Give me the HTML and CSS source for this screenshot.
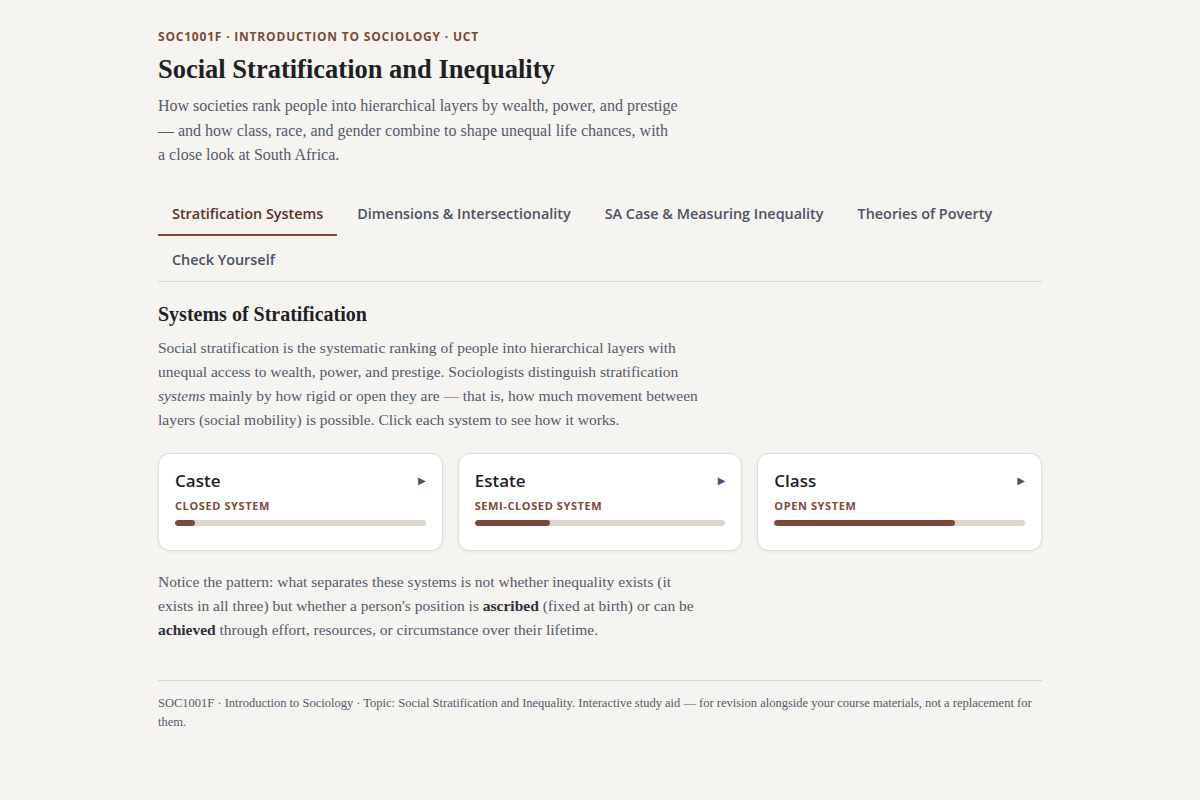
FILE: index.html
```html
<!DOCTYPE html>
<html lang="en">
<head>
<meta charset="utf-8">
<title>Social Stratification and Inequality</title>
<link rel="stylesheet" href="styles.css">
</head>
<body>
<div class="page">
  <header class="head">
    <div class="eyebrow">SOC1001F · Introduction to Sociology · UCT</div>
    <h1 class="title">Social Stratification and Inequality</h1>
    <p class="intro">How societies rank people into hierarchical layers by wealth, power, and prestige —&nbsp;and how class, race, and gender combine to shape unequal life chances, with a&nbsp;close look at South Africa.</p>
  </header>

  <nav class="tabs">
    <button class="tab active">Stratification Systems</button>
    <button class="tab">Dimensions &amp; Intersectionality</button>
    <button class="tab">SA Case &amp; Measuring Inequality</button>
    <button class="tab">Theories of Poverty</button>
    <button class="tab">Check Yourself</button>
  </nav>

  <section class="panel">
    <h2 class="h2">Systems of Stratification</h2>
    <p class="text">Social stratification is the systematic ranking of people into hierarchical layers with unequal access to wealth, power, and prestige. Sociologists distinguish stratification <em>systems</em> mainly by how rigid or open they are — that is, how much movement between layers (social mobility) is possible. Click each system to see how it works.</p>

    <div class="cards">
      <div class="card">
        <div class="card-top"><span class="card-title">Caste</span><span class="arrow">▶</span></div>
        <div class="card-sub">Closed system</div>
        <div class="bar"><div class="fill" style="width:8%"></div></div>
      </div>
      <div class="card">
        <div class="card-top"><span class="card-title">Estate</span><span class="arrow">▶</span></div>
        <div class="card-sub">Semi-closed system</div>
        <div class="bar"><div class="fill" style="width:30%"></div></div>
      </div>
      <div class="card">
        <div class="card-top"><span class="card-title">Class</span><span class="arrow">▶</span></div>
        <div class="card-sub">Open system</div>
        <div class="bar"><div class="fill" style="width:72%"></div></div>
      </div>
    </div>

    <p class="text">Notice the pattern: what separates these systems is not whether inequality exists (it exists in all three) but whether a person's position is <strong>ascribed</strong> (fixed at birth) or can be <strong>achieved</strong> through effort, resources, or circumstance over their lifetime.</p>
  </section>

  <footer class="foot">SOC1001F · Introduction to Sociology · Topic: Social Stratification and Inequality. Interactive study aid — for revision alongside your course materials, not a replacement for them.</footer>
</div>
</body>
</html>
```

FILE: styles.css
```css
* { box-sizing: border-box; }
html, body { margin: 0; padding: 0; }
body {
  background: #f6f4f0;
  font-family: "Liberation Serif", "Times New Roman", serif;
  color: #1f1f26;
}
.page {
  width: 884px;
  margin: 0 auto;
  padding-top: 29px;
}
.eyebrow {
  font-family: "Open Sans", "Noto Sans", sans-serif;
  font-size: 12px;
  font-weight: 700;
  letter-spacing: 0.8px;
  text-transform: uppercase;
  color: #7a4a3a;
  line-height: 16px;
}
.title {
  font-size: 26.5px;
  font-weight: 700;
  margin: 7px 0 0;
  line-height: 34px;
  color: #1f1f26;
}
.intro {
  font-size: 16px;
  line-height: 24.5px;
  color: #545a6a;
  max-width: 540px;
  margin: 8px 0 0;
}
.tabs {
  display: flex;
  flex-wrap: wrap;
  column-gap: 6px;
  row-gap: 3px;
  margin-top: 24px;
  border-bottom: 1px solid #ddd8cc;
}
.tab {
  font-family: "Open Sans", "Noto Sans", sans-serif;
  font-size: 14.4px;
  font-weight: 600;
  color: #4a5263;
  background: none;
  border: none;
  border-bottom: 2px solid transparent;
  padding: 12px 14px 10px;
  margin-bottom: -1px;
  line-height: 20px;
  cursor: pointer;
}
.tab.active {
  color: #5a3326;
  border-bottom-color: #7a4a3a;
}
.panel { padding-top: 19px; }
.h2 {
  font-size: 20px;
  font-weight: 700;
  margin: 0;
  line-height: 26px;
  color: #1f1f26;
}
.text {
  font-size: 15.5px;
  line-height: 24px;
  color: #545a6a;
  max-width: 545px;
  margin: 9px 0 0;
}
.text strong { color: #2d2f3a; }
.cards {
  display: grid;
  grid-template-columns: repeat(3, 1fr);
  gap: 15px;
  margin: 21px 0 19px;
}
.card {
  background: #fff;
  border: 1px solid #e2ddd3;
  border-radius: 12px;
  box-shadow: 0 1px 3px rgba(60, 40, 20, 0.08);
  padding: 15px 16px 24px;
  height: 98px;
}
.card-top {
  display: flex;
  justify-content: space-between;
  align-items: center;
}
.card-title {
  font-family: "Open Sans", "Noto Sans", sans-serif;
  font-size: 17px;
  font-weight: 600;
  color: #1f1f26;
  line-height: 24px;
}
.arrow {
  font-size: 10px;
  color: #4a5263;
  font-family: "DejaVu Sans", sans-serif;
}
.card-sub {
  font-family: "Open Sans", "Noto Sans", sans-serif;
  font-size: 11px;
  font-weight: 700;
  letter-spacing: 0.6px;
  text-transform: uppercase;
  color: #7a4a3a;
  margin-top: 5px;
  line-height: 16px;
}
.bar {
  height: 6px;
  background: #ddd6cc;
  border-radius: 3px;
  margin-top: 6px;
  overflow: hidden;
}
.fill {
  height: 100%;
  background: #7a4a3a;
  border-radius: 3px;
}
.foot {
  margin-top: 38px;
  border-top: 1px solid #ddd8cc;
  padding-top: 13px;
  font-size: 12.5px;
  line-height: 19px;
  color: #545a6a;
  padding-bottom: 40px;
}
```
